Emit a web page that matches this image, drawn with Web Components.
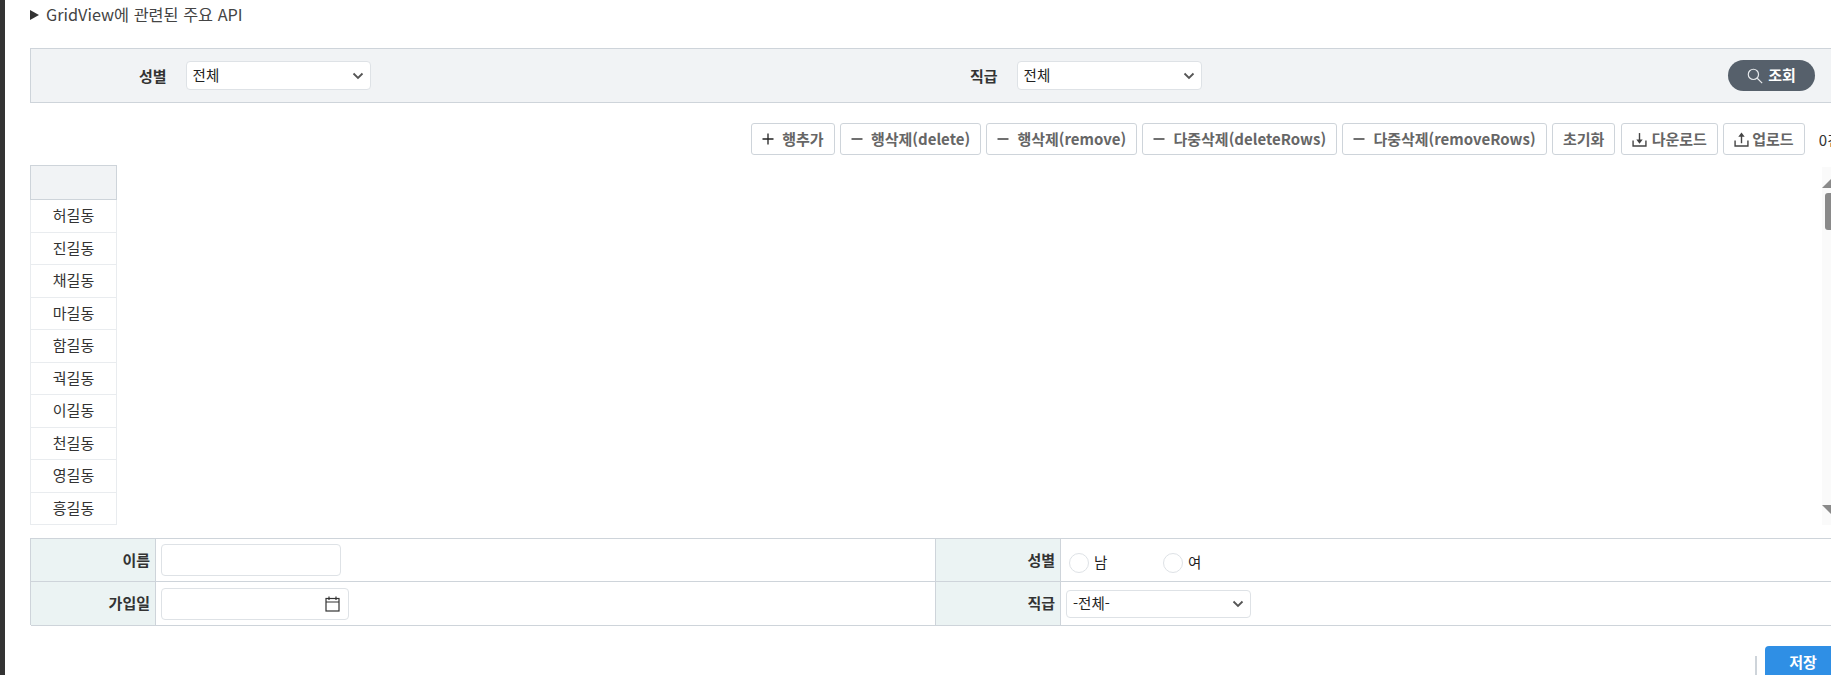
<!DOCTYPE html>
<html lang="ko"><head><meta charset="utf-8"><title>GridView</title>
<style>
html,body{margin:0;padding:0;height:675px;overflow:hidden;background:#fff}
body{font:15px "Noto Sans CJK KR","Noto Sans",sans-serif;color:#333}
</style></head><body>
<x-app>
  <x-summary>GridView에 관련된 주요 API</x-summary>
  <x-search>
    <x-field label="성별" value="전체"></x-field>
    <x-field label="직급" value="전체"></x-field>
    <x-btn slot="action" kind="search" icon="search">조회</x-btn>
  </x-search>
  <x-toolbar>
    <x-btn icon="plus">행추가</x-btn>
    <x-btn icon="minus">행삭제(delete)</x-btn>
    <x-btn icon="minus">행삭제(remove)</x-btn>
    <x-btn icon="minus">다중삭제(deleteRows)</x-btn>
    <x-btn icon="minus">다중삭제(removeRows)</x-btn>
    <x-btn>초기화</x-btn>
    <x-btn icon="down">다운로드</x-btn>
    <x-btn icon="up">업로드</x-btn>
    <span slot="count">0건</span>
  </x-toolbar>
  <x-grid>
    <x-cell>허길동</x-cell><x-cell>진길동</x-cell><x-cell>채길동</x-cell><x-cell>마길동</x-cell><x-cell>함길동</x-cell>
    <x-cell>궉길동</x-cell><x-cell>이길동</x-cell><x-cell>천길동</x-cell><x-cell>영길동</x-cell><x-cell>흥길동</x-cell>
  </x-grid>
  <x-form>
    <x-th>이름</x-th><x-td><x-input style="width:180px"></x-input></x-td>
    <x-th>성별</x-th><x-td radio><x-radio>남</x-radio><x-radio>여</x-radio></x-td>
    <x-th>가입일</x-th><x-td><x-input style="width:188px" calendar></x-input></x-td>
    <x-th>직급</x-th><x-td><x-sel value="-전체-" style="width:185px;height:28px"></x-sel></x-td>
  </x-form>
  <x-actions><x-save>저장</x-save></x-actions>
</x-app>
<script>
const ICONS={
 plus:'<svg width="12" height="12" viewBox="0 0 12 12"><path d="M6 .5v11M.5 6h11" stroke="#222" stroke-width="1.3" fill="none"/></svg>',
 minus:'<svg width="12" height="12" viewBox="0 0 12 12"><path d="M.5 6h11" stroke="#222" stroke-width="1.3" fill="none"/></svg>',
 down:'<svg width="15" height="15" viewBox="0 0 14 14" fill="none" stroke="#444" stroke-width="1.3"><path d="M1 8v5h12V8"/><path d="M7 1v7.500"/><path d="M4 7h6l-3 4z" fill="#444" stroke="none"/></svg>',
 up:'<svg width="15" height="15" viewBox="0 0 14 14" fill="none" stroke="#444" stroke-width="1.3"><path d="M1 8v5h12V8"/><path d="M7 10.500V3"/><path d="M4 4.500h6L7 .5z" fill="#444" stroke="none"/></svg>',
 search:'<svg width="16" height="16" viewBox="0 0 15 15" fill="none" stroke="#e6e9ec" stroke-width="1.1"><circle cx="6" cy="6" r="4.8"/><path d="M9.600 9.600l4.600 4.600"/></svg>'
};
function def(name,css,html){
  customElements.define(name,class extends HTMLElement{
    constructor(){super();this.attachShadow({mode:'open'})}
    connectedCallback(){
      const h=typeof html==='function'?html(this):html;
      this.shadowRoot.innerHTML='<style>'+css+'</style>'+h;
    }
  });
}
def('x-app',`:host{display:block;box-sizing:border-box;width:1831px;height:675px;border-left:5px solid #333;padding-left:25px;overflow:hidden}`,'<slot></slot>');
def('x-summary',`:host{display:flex;align-items:center;gap:7px;height:28px;margin-bottom:20px;color:#444;font-size:16.300px}
 i{width:0;height:0;border-left:9px solid #333;border-top:5px solid transparent;border-bottom:5px solid transparent;margin-top:2px}`,'<i></i><span><slot></slot></span>');
def('x-search',`:host{display:grid;grid-template-columns:831px 1fr auto;align-items:center;height:55px;box-sizing:border-box;margin-right:-10px;
  background:#f1f3f5;border:1px solid #ced4da;padding-right:25px;}`,'<slot></slot><slot name="action"></slot>');
def('x-field',`:host{display:flex;align-items:center;font-weight:700;font-size:15px;color:#333}
 span{margin-left:108px;margin-right:19px}`,
 e=>`<span>${e.getAttribute('label')}</span><x-sel value="${e.getAttribute('value')}"></x-sel>`);
def('x-sel',`:host{display:flex;align-items:center;justify-content:space-between;width:185px;height:29px;box-sizing:border-box;background:#fff;
  border:1px solid #dee2e6;border-radius:4px;padding:0 6px 2px 6px;font-weight:400;font-size:14.500px;color:#222}
 svg{display:block;margin-top:2px}`,
 e=>`<span>${e.getAttribute('value')}</span><svg width="12" height="8" viewBox="0 0 12 8" fill="none"><path d="M1.5 1.5 6 6l4.500-4.500" stroke="#555" stroke-width="1.8"/></svg>`);
def('x-btn',`:host{display:inline-flex;align-items:center;justify-content:center;gap:8px;height:32px;box-sizing:border-box;padding:0 10px;
  background:#fff;border:1px solid #ced4da;border-radius:3px;color:#666;font-weight:700;font-size:15px;white-space:nowrap}
 span{margin-top:-2px}
 :host([icon="plus"]),:host([icon="minus"]){gap:8px}
 :host([icon="down"]){gap:5px;padding:0 10px}
 :host([icon="up"]){gap:3px}
 :host([kind="search"]){height:31px;width:87px;border:0;border-radius:16px;background:#56606b;color:#fff;gap:5px;padding:0}`,
 e=>(ICONS[e.getAttribute('icon')]||'')+'<span><slot></slot></span>');
def('x-toolbar',`:host{display:flex;justify-content:flex-end;align-items:center;gap:5.300px;margin:20px -10px 10px 0}
 ::slotted([slot=count]){margin-left:9px;color:#333;font-size:15px;white-space:nowrap}`,'<slot></slot><slot name="count"></slot>');
def('x-grid',`:host{display:flex;justify-content:space-between;height:360px}
 .col{width:87px;box-sizing:border-box;display:flex;flex-direction:column}
 .hd{height:35px;box-sizing:border-box;background:#f1f3f5;border:1px solid #ced4da;flex:none}
 .sb{position:relative;width:9px;background:#fafafa;margin-top:2px;height:358px}
 .up,.dn{position:absolute;right:0;width:0;height:0;border-left:9px solid transparent}
 .up{top:12px;border-bottom:9px solid #8a8a8a}
 .dn{bottom:11px;border-top:9px solid #8a8a8a}
 .th{position:absolute;left:3px;top:26px;width:12px;height:37px;border-radius:3px;background:#8a8a8a}`,
 `<div class="col"><div class="hd"></div><slot></slot></div><div class="sb"><i class="up"></i><i class="th"></i><i class="dn"></i></div>`);
def('x-cell',`:host{display:flex;align-items:center;justify-content:center;height:32.500px;box-sizing:border-box;border:1px solid #e9ecef;border-top:0;padding-bottom:2px;font-size:15px;color:#333}`,'<slot></slot>');
def('x-form',`:host{display:grid;grid-template-columns:125px 780px 125px 1fr;grid-template-rows:43px 44px;margin:13px -10px 0 0;border:solid #ced4da;border-width:1px 0 0 1px;height:87px;box-sizing:border-box}`,'<slot></slot>');
def('x-th',`:host{display:flex;align-items:center;justify-content:flex-end;padding:0 5px 2px 0;box-sizing:border-box;background:#ebf3f3;border:solid #ced4da;border-width:0 1px 1px 0;font-weight:700;font-size:15px;color:#333}`,'<slot></slot>');
def('x-td',`:host{display:flex;align-items:center;padding-left:5px;box-sizing:border-box;border:solid #ced4da;border-width:0 1px 1px 0;font-size:14px}
 :host([radio]){padding:3px 0 0 8px}`,'<slot></slot>');
def('x-input',`:host{display:flex;align-items:center;justify-content:flex-end;height:32px;box-sizing:border-box;background:#fff;border:1px solid #dee2e6;border-radius:4px;padding-right:8px}
 svg{display:block;margin-top:1px}`,
 e=>e.hasAttribute('calendar')?'<svg width="15" height="16" viewBox="0 0 15 16" fill="none" stroke="#333" stroke-width="1.2"><rect x="1" y="2.500" width="13" height="12.500"/><path d="M1 6h13M4 .5v3.500M11 .5v3.500"/></svg>':'');
def('x-radio',`:host{display:flex;align-items:center;width:94px;font-size:14.500px;color:#222}
 i{width:20px;height:20px;box-sizing:border-box;border:1px solid #dee2e6;border-radius:50%;background:#fff;margin:3px 5px 0 0}
 span{margin-top:-1px}`,'<i></i><span><slot></slot></span>');
def('x-actions',`:host{display:flex;justify-content:flex-end;align-items:flex-end;margin-top:21px;margin-right:-10px;height:40px}
 i{width:2px;height:30px;background:#ced4da;margin:10px 8px 0 0;align-self:flex-start}`,'<i></i><slot></slot>');
def('x-save',`:host{display:flex;justify-content:center;padding-top:5px;box-sizing:border-box;width:76px;height:40px;background:#2f8fe5;color:#fff;border-radius:4px 4px 0 0;font-weight:700;font-size:15px}`,'<slot></slot>');
</script>
</body></html>
